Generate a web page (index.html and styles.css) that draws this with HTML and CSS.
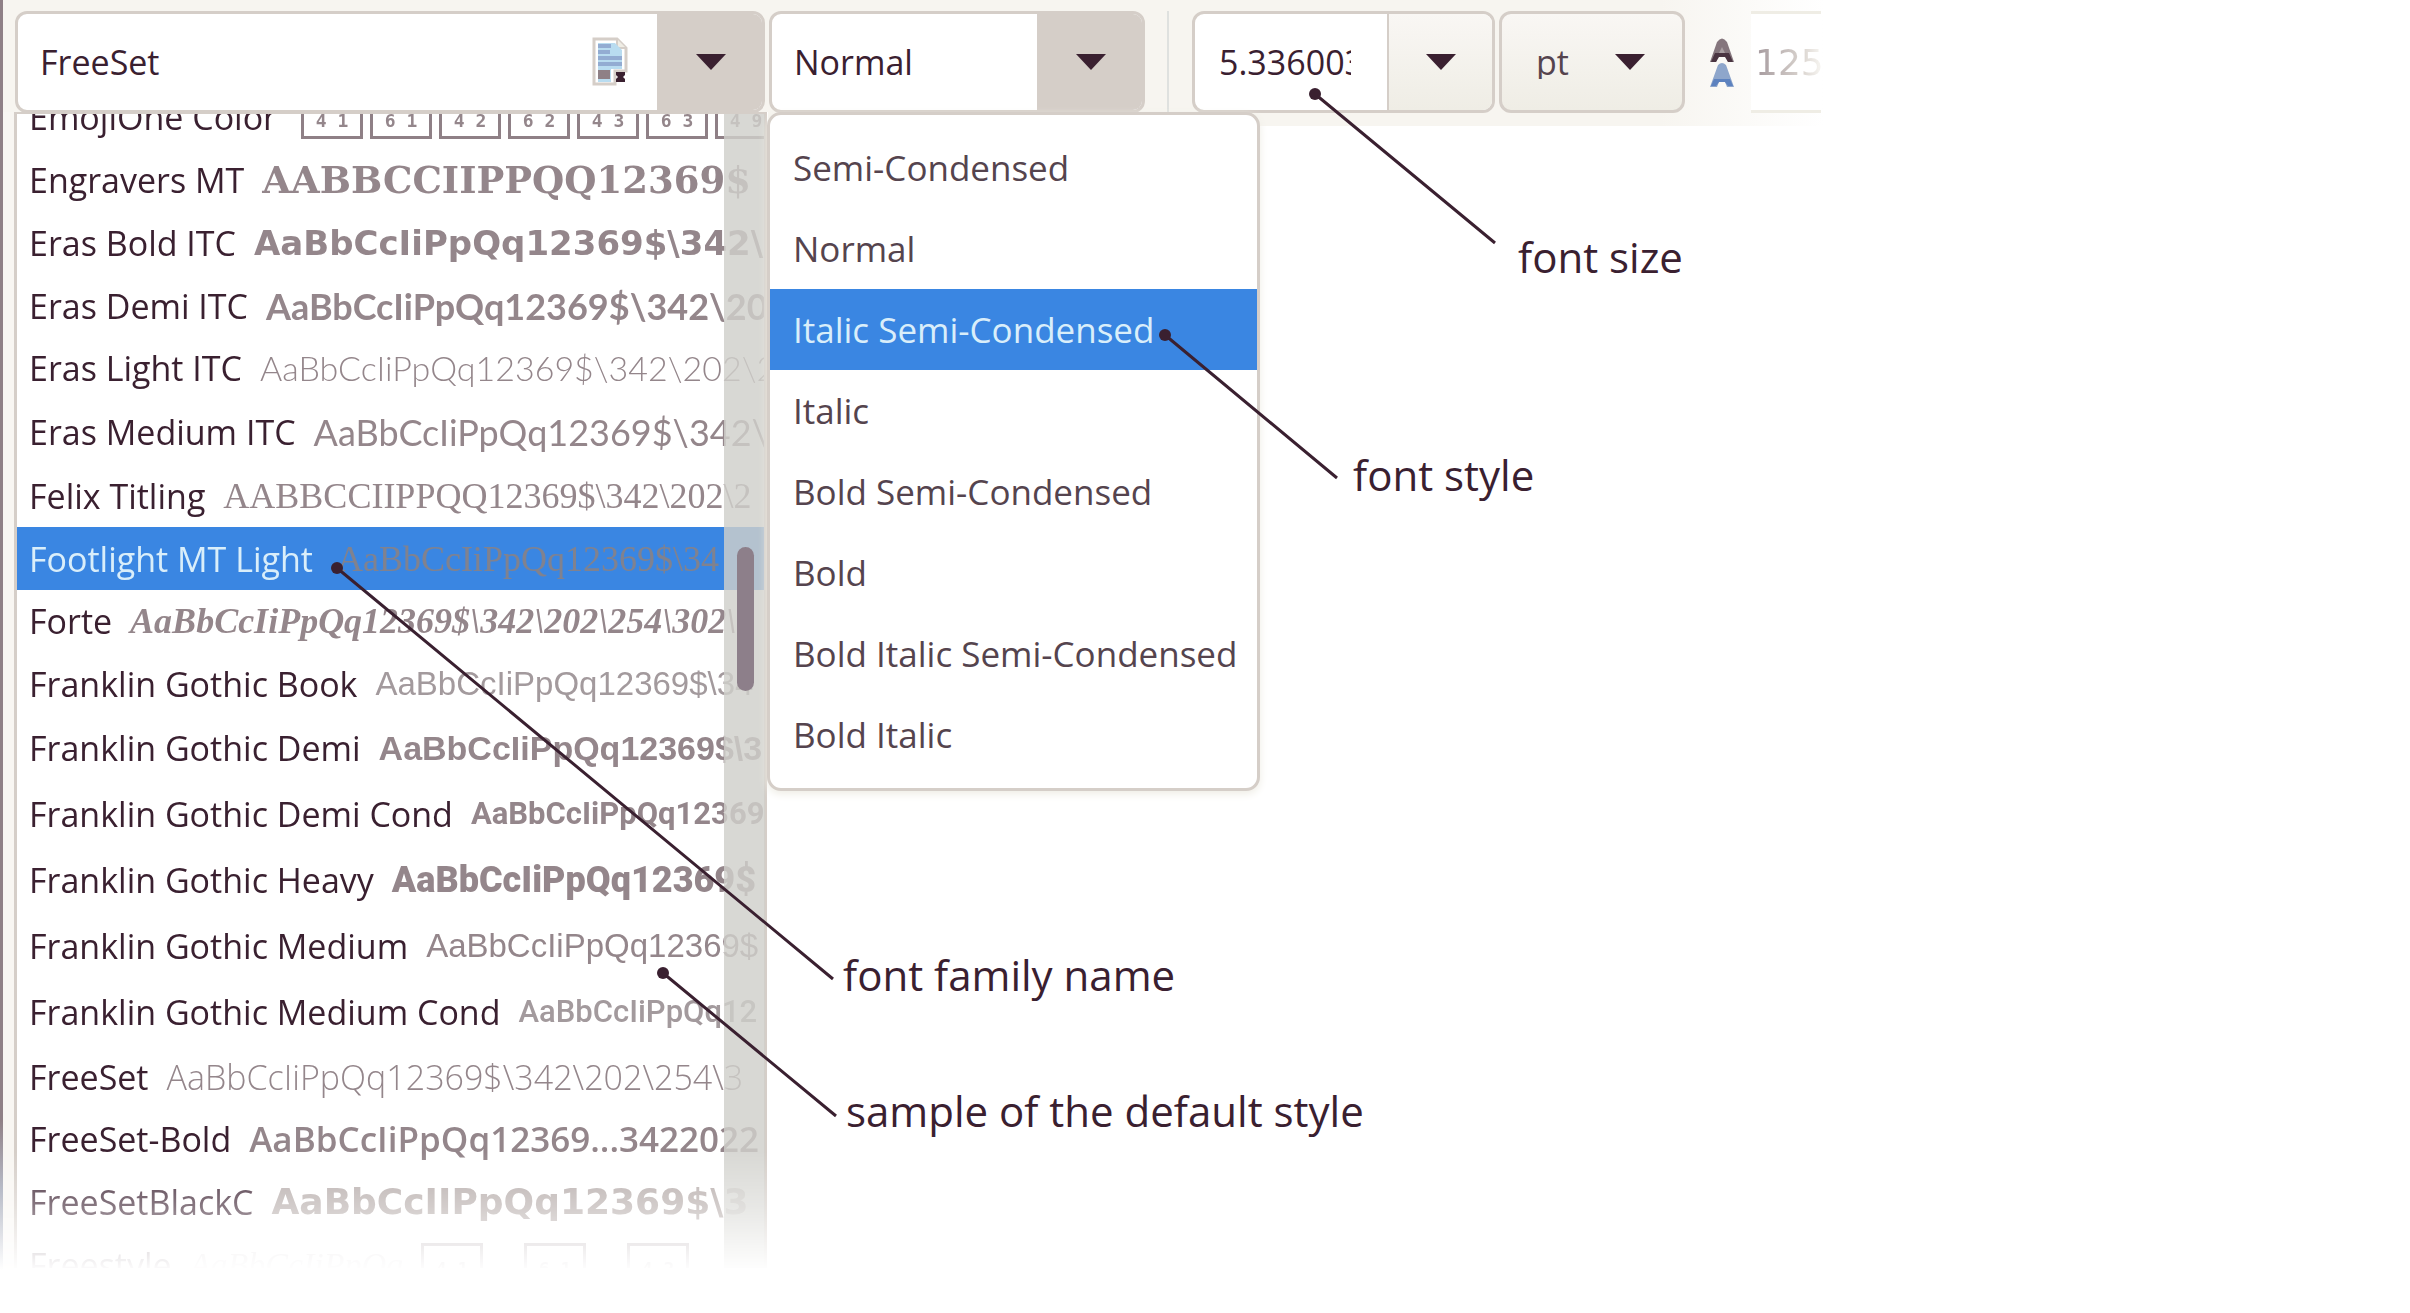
FILE: index.html
```html
<!DOCTYPE html>
<html lang="en">
<head>
<meta charset="utf-8">
<title>Font selection</title>
<link rel="stylesheet" href="styles.css">
</head>
<body>
<main class="stage">
  <div class="toolbar">
    <div class="combo combo-family">
      <input class="entry" type="text" value="FreeSet" aria-label="Font family">
      <svg class="doc-icon" viewBox="0 0 38 50" aria-hidden="true">
        <path d="M3 2H26L35 11V34H24V47H3Z" fill="#fff" stroke="#d5cec8" stroke-width="3"/>
        <path d="M26 2V11H35" fill="#efede5" stroke="#d5cec8" stroke-width="2"/>
        <path d="M7 6H24L31 13V32H20V45H7Z" fill="#b9dcf0"/>
        <path d="M7 9H20M7 15H19M7 21H31M7 27H31" stroke="#93acd2" stroke-width="4"/>
        <rect x="7" y="33" width="12" height="9" fill="#8f8086"/>
        <path d="M25 35H34V38L32 40L34 42V45H25V42L27 40L25 38Z" fill="#3a2030"/>
      </svg>
      <button class="drop active" type="button" aria-label="Show font families"><svg class="arrow" viewBox="0 0 30 16" aria-hidden="true"><path d="M0 0H30L15 16Z"/></svg></button>
    </div>
    <div class="combo combo-style">
      <input class="entry" type="text" value="Normal" aria-label="Font style">
      <button class="drop active" type="button" aria-label="Show font styles"><svg class="arrow" viewBox="0 0 30 16" aria-hidden="true"><path d="M0 0H30L15 16Z"/></svg></button>
      <ul class="style-menu" role="listbox" aria-label="Font styles">
        <li role="option">Semi-Condensed</li>
        <li role="option">Normal</li>
        <li role="option" class="selected" aria-selected="true">Italic Semi-Condensed</li>
        <li role="option">Italic</li>
        <li role="option">Bold Semi-Condensed</li>
        <li role="option">Bold</li>
        <li role="option">Bold Italic Semi-Condensed</li>
        <li role="option">Bold Italic</li>
      </ul>
    </div>
    <div class="separator"></div>
    <div class="combo combo-size">
      <input class="entry" type="text" value="5.336003" aria-label="Font size">
      <button class="drop" type="button" aria-label="Show font sizes"><svg class="arrow" viewBox="0 0 30 16" aria-hidden="true"><path d="M0 0H30L15 16Z"/></svg></button>
    </div>
    <div class="combo combo-unit">
      <select class="unit" aria-label="Unit"><option>pt</option></select>
      <svg class="arrow" viewBox="0 0 30 16" aria-hidden="true"><path d="M0 0H30L15 16Z"/></svg>
    </div>
    <svg class="spacing-icon" viewBox="0 0 26 50" aria-hidden="true">
      <path d="M1 24L8 4Q13 -3 18 4L25 24H19L17 19H9L7 24Z" fill="#85767d"/>
      <path d="M6 15H20L24 24H19L16 19H10L7 24H2Z" fill="#4a3441"/>
      <path d="M10 15L13 9L16 15Z" fill="#a99fa2"/>
      <path d="M1 49L9 27Q13 23 17 27L25 49H18L16 44H10L8 49Z" fill="#8ea6cb"/>
      <path d="M5 41H21L24 48H19L16 44H10L7 48H2Z" fill="#5d82bf"/>
    </svg>
    <input class="entry line-height" type="text" value="125" aria-label="Line height">
  </div>

  <div class="list-pane">
    <ul class="font-list" role="listbox" aria-label="Font families">
      <li class="row first" role="option"><span>EmojiOne Color</span><span class="boxes"><i>4 1</i><i>6 1</i><i>4 2</i><i>6 2</i><i>4 3</i><i>6 3</i><i>4 9</i></span></li>
      <li class="row" role="option"><span>Engravers MT</span><span class="sample engravers">AABBCCIIPPQQ12369$</span></li>
      <li class="row" role="option"><span>Eras Bold ITC</span><span class="sample eras-bold">AaBbCcIiPpQq12369$\342\</span></li>
      <li class="row" role="option"><span>Eras Demi ITC</span><span class="sample eras-demi">AaBbCcIiPpQq12369$\342\20</span></li>
      <li class="row short" role="option"><span>Eras Light ITC</span><span class="sample eras-light">AaBbCcIiPpQq12369$\342\202\2</span></li>
      <li class="row tall" role="option"><span>Eras Medium ITC</span><span class="sample eras-medium">AaBbCcIiPpQq12369$\342\</span></li>
      <li class="row short" role="option"><span>Felix Titling</span><span class="sample felix">AABBCCIIPPQQ12369$\342\202\2</span></li>
      <li class="row selected" role="option" aria-selected="true"><span>Footlight MT Light</span><span class="sample footlight">AaBbCcIiPpQq12369$\34</span></li>
      <li class="row short" role="option"><span>Forte</span><span class="sample forte">AaBbCcIiPpQq12369$\342\202\254\302\</span></li>
      <li class="row" role="option"><span>Franklin Gothic Book</span><span class="sample book">AaBbCcIiPpQq12369$\34</span></li>
      <li class="row tall" role="option"><span>Franklin Gothic Demi</span><span class="sample demi">AaBbCcIiPpQq12369$\3</span></li>
      <li class="row tall" role="option"><span>Franklin Gothic Demi Cond</span><span class="sample demi-cond">AaBbCcIiPpQq12369</span></li>
      <li class="row tall" role="option"><span>Franklin Gothic Heavy</span><span class="sample heavy">AaBbCcIiPpQq12369$</span></li>
      <li class="row tall" role="option"><span>Franklin Gothic Medium</span><span class="sample book strong">AaBbCcIiPpQq12369$</span></li>
      <li class="row tall" role="option"><span>Franklin Gothic Medium Cond</span><span class="sample medium-cond">AaBbCcIiPpQq12</span></li>
      <li class="row" role="option"><span>FreeSet</span><span class="sample freeset">AaBbCcIiPpQq12369$\342\202\254\3</span></li>
      <li class="row short" role="option"><span>FreeSet-Bold</span><span class="sample freeset-bold">AaBbCcIiPpQq12369...3422022</span></li>
      <li class="row" role="option"><span>FreeSetBlackC</span><span class="sample freeset-black">AaBbCcIIPpQq12369$\3</span></li>
      <li class="row faint" role="option"><span>Freestyle</span><span class="sample freestyle">AaBbCcIiPpQq</span><span class="boxes wide"><i>4 1</i><i>6 1</i><i>4 2</i></span></li>
    </ul>
    <div class="scrollbar"><div class="thumb"></div></div>
  </div>

  <svg class="leaders" aria-hidden="true">
    <g fill="none" stroke="#3a2030" stroke-width="3">
      <path d="M1315 94L1495 243M1165 335L1337 478M337 568L833 979M663 973L836 1116"/>
    </g>
    <g fill="#3a2030">
      <circle cx="1315" cy="94" r="6"/><circle cx="1165" cy="335" r="6"/><circle cx="337" cy="568" r="6"/><circle cx="663" cy="973" r="6"/>
    </g>
  </svg>
  <span class="note note-size">font size</span>
  <span class="note note-style">font style</span>
  <span class="note note-family">font family name</span>
  <span class="note note-sample">sample of the default style</span>
</main>
</body>
</html>
```
FILE: styles.css
```css
* { box-sizing: border-box; }
body {
  margin: 0;
  background: #fff;
  color: #3a2030;
  font: 34px/1 "Open Sans", "Noto Sans", sans-serif;
}
ul { list-style: none; margin: 0; padding: 0; }
input, button, select { font: inherit; color: inherit; border: 0; margin: 0; border-radius: 0; }

.stage { position: relative; min-height: 100vh; overflow: hidden; }

.stage::before {
  content: "";
  position: absolute;
  z-index: 3;
  inset: 0 auto 0 0;
  width: 3px;
  background: linear-gradient(#8f8086 1120px, #b8bcc8 1190px, #fff 1270px);
}

/* Toolbar */
.toolbar {
  display: flex;
  align-items: flex-start;
  height: 126px;
  padding: 11px 0 0 15px;
  background: linear-gradient(90deg, #f7f5f0 1660px, #fff 1824px);
}
.combo {
  position: relative;
  display: flex;
  align-items: center;
  flex: none;
  height: 102px;
  border: 3px solid #d5cec8;
  border-radius: 12px;
  background: #fff;
}
.combo .entry { flex: 1; min-width: 0; height: 100%; background: none; padding: 0 0 0 22px; }
.combo-family { width: 750px; margin-right: 4px; }
.combo-style { width: 376px; margin-right: 22px; }
.combo-size { width: 303px; margin: 0 4px 0 23px; }
.combo-size .entry { padding: 0 36px 0 24px; }
.combo-unit { width: 186px; background: linear-gradient(#f9f7f4, #efede5); color: #55444e; }

.drop {
  display: flex;
  align-items: center;
  justify-content: center;
  width: 105px;
  height: 100%;
  padding: 0;
  border-left: 2px solid #d5cec8;
  border-radius: 0 9px 9px 0;
  background: linear-gradient(#f9f7f4, #efede5);
}
.drop.active { background: #d5cec8; }
.arrow { width: 30px; height: 16px; fill: #3a2030; }
.doc-icon { width: 38px; height: 50px; margin-right: 28px; }
.separator { width: 2px; height: 102px; background: #dfe1df; }
.unit { appearance: none; flex: 1; height: 100%; padding: 0 0 0 34px; background: none; }
.combo-unit .arrow { margin-right: 37px; }
.spacing-icon { width: 26px; height: 50px; margin: 27px 16px 0 24px; }
.line-height {
  width: 70px;
  height: 102px;
  padding: 0 0 0 4px;
  border: solid #efede5;
  border-width: 3px 0;
  color: transparent;
  font: 36px "DejaVu Sans", sans-serif;
  background: linear-gradient(90deg, #a09499, #d8d2cd 50px, #f4f2ee 68px) text, #fff;
}

/* Style menu */
.style-menu {
  position: absolute;
  z-index: 2;
  top: 98px;
  left: -5px;
  width: 493px;
  padding: 12px 0 13px;
  border: 3px solid #d5cec8;
  border-radius: 14px;
  background: #fff;
  box-shadow: 0 3px 8px #efede5;
  color: #55444e;
  font-size: 35px;
}
.style-menu li { height: 81px; padding-left: 23px; line-height: 82px; }
.style-menu .selected, .font-list .selected { background: #3a86e2; color: #d9eefa; }

/* Family list */
.list-pane {
  position: relative;
  width: 768px;
  height: 1156px;
  margin-top: -14px;
  padding-left: 14px;
  background: linear-gradient(90deg, #f8f6f2 15px, #fff 15px);
  mask-image: linear-gradient(#000 1040px, rgb(0 0 0 / 60%) 1095px, transparent 1160px);
}
.font-list {
  width: 753px;
  height: 100%;
  border: solid #d5cec8;
  border-width: 2px 3px 0;
  background: #fff;
  overflow: hidden;
}
.row {
  display: flex;
  align-items: center;
  gap: 18px;
  height: 63px;
  padding-left: 12px;
  white-space: nowrap;
  line-height: 62px;
}
.row.first { margin-top: -29px; }
.row.first, .row.selected { gap: 24px; }
.row.short { height: 62px; }
.row.tall { height: 66px; }
.row.faint { gap: 18px; opacity: .6; }
.sample { color: #94868b; }
.selected .sample { color: #80828f; }

.engravers { font: 700 37px/62px "DejaVu Serif", serif; }
.eras-bold { font: 700 34px/62px "DejaVu Sans", sans-serif; }
.eras-demi { font: 700 36px/62px Lato, sans-serif; }
.eras-light { font: 300 34px/62px Lato, sans-serif; }
.eras-medium { font: 400 36px/62px Lato, sans-serif; }
.felix, .footlight { font: 36px/62px "Liberation Serif", serif; }
.forte { font: italic 700 36px/62px "Liberation Serif", serif; }
.book { font: 33px/62px "Liberation Sans", sans-serif; color: #a39a9d; }
.book.strong { color: #94868b; }
.demi { font: 700 34px/62px "Liberation Sans", sans-serif; }
.demi-cond { font: 700 31px/62px Roboto, sans-serif; }
.heavy { font: 900 36px/62px Roboto, sans-serif; }
.medium-cond { font: 500 31px/62px Roboto, sans-serif; color: #a39a9d; }
.freeset { font-weight: 300; }
.freeset-bold { font-weight: 600; font-size: 35px; }
.freeset-black { font: 700 36px/62px "DejaVu Sans", sans-serif; color: #b5aba9; }
.freestyle { font: italic 34px/62px "Liberation Serif", serif; opacity: .5; }

.boxes { display: flex; gap: 7px; }
.boxes i {
  width: 62px;
  height: 44px;
  border: 3px solid #8f8086;
  font: 700 18px/46px "DejaVu Sans Mono", monospace;
  text-align: center;
  color: #94868b;
}
.boxes.wide { gap: 41px; }

.scrollbar {
  position: absolute;
  top: 2px;
  right: 3px;
  bottom: 0;
  width: 41px;
  padding: 433px 11px 0 13px;
  background: rgb(208 208 203 / 82%);
}
.thumb { height: 144px; border-radius: 9px; background: #8d7f8a; }

/* Callouts */
.leaders { position: absolute; z-index: 4; inset: 0; width: 100%; height: 100%; }
.note { position: absolute; z-index: 4; font-size: 42px; line-height: 60px; white-space: nowrap; }
.note-size { left: 1518px; top: 227px; }
.note-style { left: 1353px; top: 445px; }
.note-family { left: 843px; top: 945px; }
.note-sample { left: 846px; top: 1081px; }
```
